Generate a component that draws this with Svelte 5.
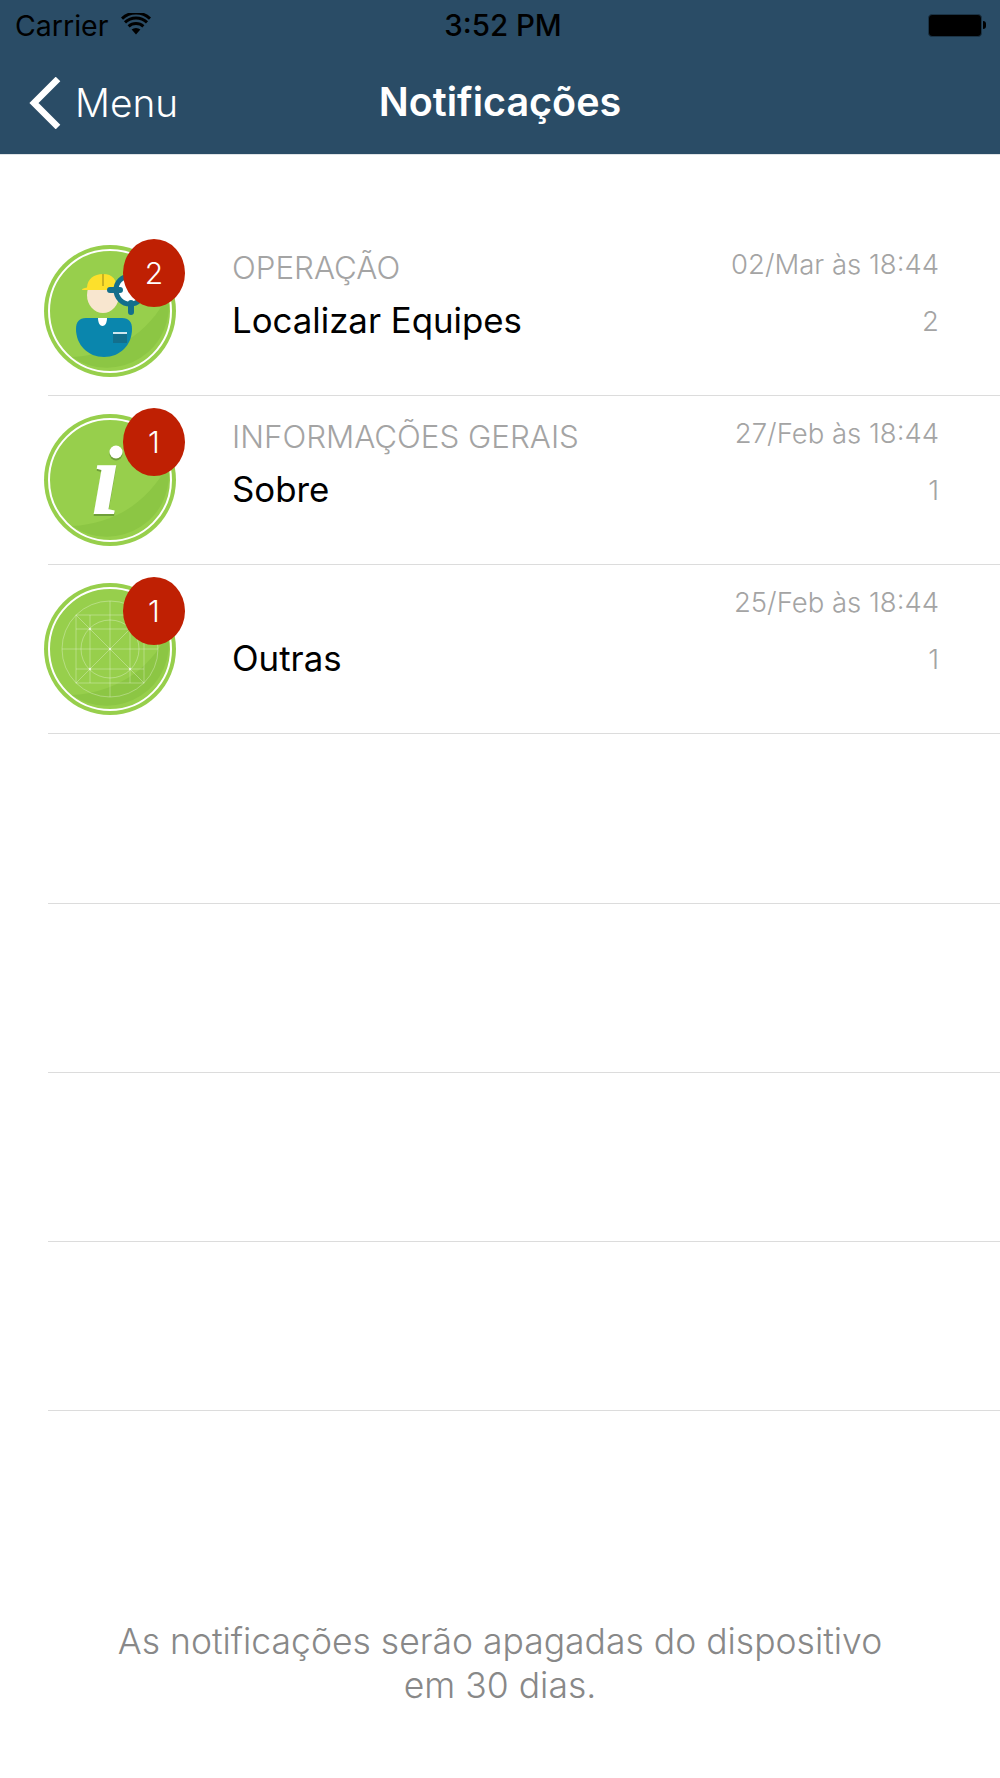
<script>
  const rows = [
    { kind: 'worker', badge: 2, label: 'OPERAÇÃO', title: 'Localizar Equipes', date: '02/Mar às 18:44' },
    { kind: 'info', badge: 1, label: 'INFORMAÇÕES GERAIS', title: 'Sobre', date: '27/Feb às 18:44' },
    { kind: 'grid', badge: 1, label: '', title: 'Outras', date: '25/Feb às 18:44' }
  ];
  const emptyRows = [1, 2, 3, 4];
  const gridNodes = [[46, 46], [46, 86], [86, 86], [66, 66]];
</script>

<div class="page">
  <header class="top">
    <div class="status">
      <div class="status-left">
        <span>Carrier</span>
        <svg class="wifi" viewBox="0 0 30 22" width="30" height="22">
          <path d="M15 21.5 L10.6 16.6 A6.5 6.5 0 0 1 19.4 16.6 Z" fill="#000" />
          <path d="M7.6 13.4 A11 11 0 0 1 22.4 13.4" fill="none" stroke="#000" stroke-width="3" />
          <path d="M4 9.3 A16 16 0 0 1 26 9.3" fill="none" stroke="#000" stroke-width="3" />
          <path d="M1 5.6 A20.5 20.5 0 0 1 29 5.6" fill="none" stroke="#000" stroke-width="3" />
        </svg>
      </div>
      <span class="time">3:52 PM</span>
      <div class="battery"><span class="cell"></span><span class="tip"></span></div>
    </div>
    <nav class="bar">
      <div class="back">
        <svg viewBox="0 0 34 52" width="34" height="52">
          <path d="M31 2 L7 26 L31 50" fill="none" stroke="#fff" stroke-width="6.5" />
        </svg>
        <span>Menu</span>
      </div>
      <h1>Notificações</h1>
    </nav>
  </header>

  <ul class="list">
    {#each rows as row}
      <li class="row">
        <div class="avatar">
          <svg viewBox="0 0 132 132" width="132" height="132">
            <circle cx="66" cy="66" r="66" fill="#97cf4c" />
            <path d="M28 112 C68 110 104 90 124 50 A62 62 0 0 1 28 112 Z" fill="#8cc644" />
            <circle cx="66" cy="66" r="61" fill="none" stroke="#fff" stroke-width="2" />
            {#if row.kind === 'worker'}
              <ellipse cx="59" cy="50" rx="16" ry="18" fill="#f8e6cf" />
              <path d="M38 45 C38 43.5 40 43 43 42.5 C43.5 34 50 29 59 29 C69 29 73 35 73 45 Z" fill="#fde02b" />
              <path d="M59 29 V41" stroke="#b9a420" stroke-width="1.5" />
              <circle cx="86" cy="45" r="14" fill="#fff" stroke="#136f8c" stroke-width="5" />
              <path d="M66 45 H76 M87 58 V67" stroke="#136f8c" stroke-width="6" stroke-linecap="round" />
              <path d="M42 73 H78 C85 73 88 77 88 84 C88 100 76 112 60 112 C44 112 32 100 32 84 C32 77 35 73 42 73 Z" fill="#0a86ad" />
              <path d="M54 73 H63 C63 78 61 81 58.5 81 C56 81 54 78 54 73 Z" fill="#fff" />
              <rect x="69" y="87" width="14" height="11" fill="#136f8c" />
              <rect x="69" y="87" width="14" height="2" fill="#cfe6ee" />
            {:else if row.kind === 'info'}
              <circle cx="72" cy="40" r="6.5" fill="#6f9f3a" />
              <circle cx="72" cy="38" r="6.5" fill="#fff" />
              <text class="info-mark shade" x="62" y="102">ı</text>
              <text class="info-mark" x="62" y="100">ı</text>
            {:else}
              <g class="guides">
                <circle cx="66" cy="66" r="48" />
                <circle cx="66" cy="66" r="29" />
                <rect x="32" y="32" width="68" height="68" />
                <path d="M18 66 H114 M66 18 V114 M46 32 V100 M86 32 V100 M32 46 H100 M32 86 H100 M32 32 L100 100 M100 32 L32 100" />
              </g>
              {#each gridNodes as [x, y]}
                <circle class="node" cx={x} cy={y} r="1.2" />
              {/each}
            {/if}
          </svg>
          <span class="badge">{row.badge}</span>
        </div>
        <div class="text">
          <span class="label">{row.label}</span>
          <span class="title">{row.title}</span>
        </div>
        <div class="meta">
          <span class="date">{row.date}</span>
          <span class="count">{row.badge}</span>
        </div>
      </li>
    {/each}
    {#each emptyRows as n}
      <li class="row empty"></li>
    {/each}
  </ul>

  <p class="note">As notificações serão apagadas do dispositivo<br />em 30 dias.</p>
</div>

<style>
  :global(body) {
    margin: 0;
    background: #fff;
  }
  .page {
    width: 1000px;
    height: 1778px;
    font-family: Inter, "Liberation Sans", sans-serif;
    overflow: hidden;
  }

  /* Header */
  .top {
    height: 154px;
    background: #2a4c66;
    border-bottom: 1px solid #dfe3e6;
  }
  .status {
    height: 50px;
    display: flex;
    align-items: center;
    justify-content: space-between;
    position: relative;
    padding: 0 14px 0 15px;
    color: #000;
    font-size: 28.5px;
  }
  .status-left {
    display: flex;
    align-items: center;
    gap: 13px;
  }
  .wifi {
    margin-top: -3px;
  }
  .time {
    position: absolute;
    left: 6px;
    right: 0;
    text-align: center;
    font-size: 29.5px;
    font-weight: 500;
  }
  .battery {
    display: flex;
    align-items: center;
  }
  .cell {
    width: 52px;
    height: 21px;
    background: #000;
    border: 1px solid #1b3345;
    border-radius: 4px;
  }
  .tip {
    width: 3px;
    height: 8px;
    background: #000;
    border-radius: 0 3px 3px 0;
    margin-left: 1px;
  }
  .bar {
    height: 104px;
    display: flex;
    align-items: center;
    justify-content: center;
    position: relative;
    color: #fff;
  }
  .bar h1 {
    margin: 0;
    font-size: 39.5px;
    font-weight: 600;
  }
  .back {
    position: absolute;
    left: 27px;
    top: 25px;
    display: flex;
    align-items: center;
    gap: 14px;
    font-size: 38.8px;
    font-weight: 300;
  }
  .back svg {
    margin-top: 2px;
  }

  /* List */
  .list {
    list-style: none;
    margin: 72px 0 0;
    padding: 0;
  }
  .row {
    height: 168.17px;
    margin-left: 48px;
    border-bottom: 1.5px solid #dcdcdc;
    display: flex;
    align-items: flex-start;
    position: relative;
  }
  .avatar {
    position: relative;
    width: 132px;
    height: 132px;
    margin: 18px 56px 0 -4px;
    flex: none;
  }
  .avatar svg {
    display: block;
  }
  .badge {
    position: absolute;
    left: 79px;
    top: -6px;
    width: 62px;
    height: 68px;
    border-radius: 50%;
    background: #bf2003;
    color: #fff;
    font-size: 30px;
    font-weight: 300;
    display: flex;
    align-items: center;
    justify-content: center;
  }
  .info-mark {
    font-family: "Liberation Serif", serif;
    font-style: italic;
    font-weight: 700;
    font-size: 106px;
    fill: #fff;
    text-anchor: middle;
  }
  .info-mark.shade {
    fill: #6f9f3a;
  }
  .guides {
    fill: none;
    stroke: #fff;
    stroke-opacity: 0.3;
    stroke-width: 1;
  }
  .node {
    fill: #fff;
    fill-opacity: 0.7;
  }
  .text {
    flex: 1;
    display: flex;
    flex-direction: column;
    padding-top: 21px;
  }
  .label {
    height: 40px;
    line-height: 40px;
    font-size: 31.3px;
    font-weight: 300;
    color: #a4a4a4;
  }
  .title {
    margin-top: 12px;
    line-height: 40px;
    font-size: 34.8px;
    color: #000;
  }
  .meta {
    display: flex;
    flex-direction: column;
    align-items: flex-end;
    padding: 17px 61px 0 0;
    font-size: 27.5px;
    font-weight: 300;
    color: #a4a4a4;
  }
  .date {
    line-height: 40px;
  }
  .count {
    margin-top: 17px;
    line-height: 40px;
  }

  .note {
    margin: 209px 0 0;
    text-align: center;
    font-size: 35.5px;
    font-weight: 300;
    line-height: 44px;
    color: #888;
  }
</style>
